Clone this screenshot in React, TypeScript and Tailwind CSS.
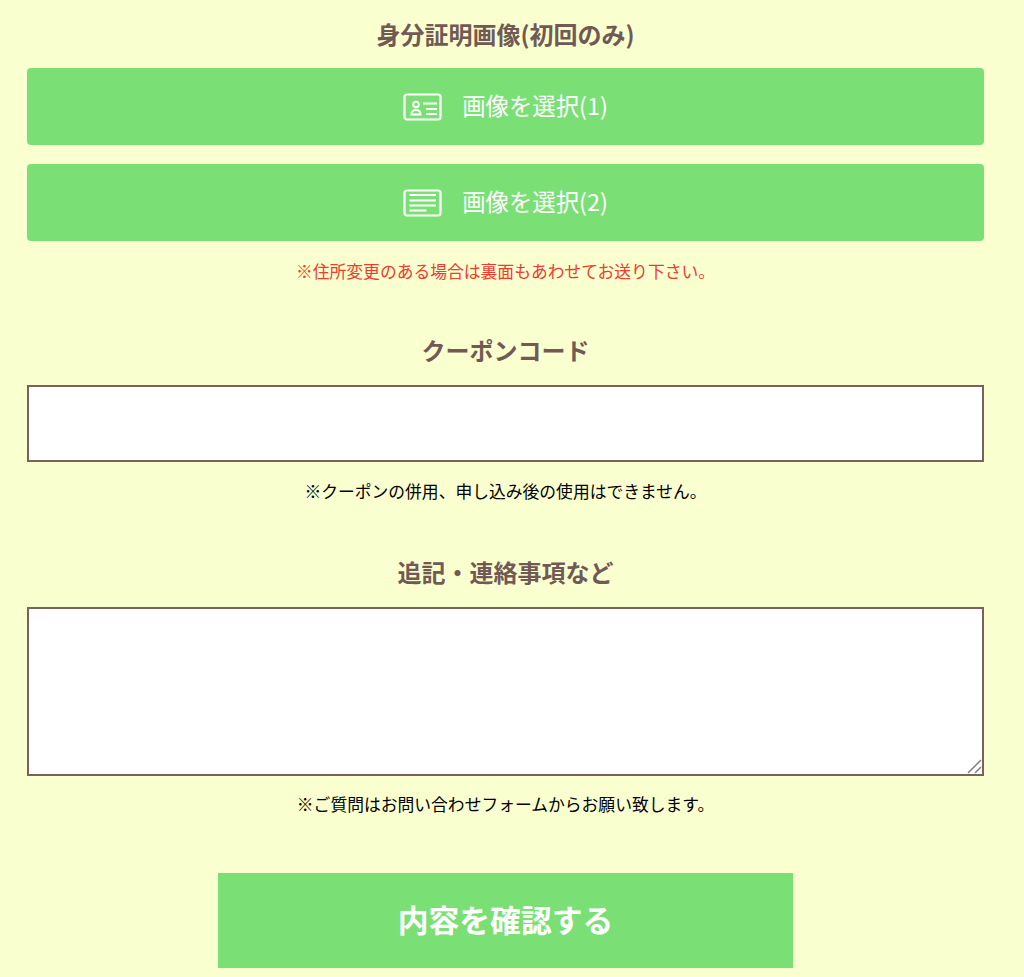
import React from "react";

const font = "font-['Noto_Sans_CJK_JP','Noto_Sans',sans-serif]";

function IdIcon() {
  return (
    <svg width="39" height="28" viewBox="0 0 39 28" fill="none" stroke="white" strokeWidth="2.2">
      <rect x="1.5" y="1.5" width="36" height="25" rx="2.5" />
      <circle cx="13" cy="11.5" r="2.8" strokeWidth="2" />
      <path d="M8.5 21.500c0-3 1.500-4.500 4.500-4.500s4.500 1.500 4.500 4.500z" strokeWidth="2" />
      <path d="M20 10.500h14M23 16h11M23 21h11" strokeWidth="2" />
    </svg>
  );
}

function LinesIcon() {
  return (
    <svg width="39" height="28" viewBox="0 0 39 28" fill="none" stroke="white" strokeWidth="2.2">
      <rect x="1.5" y="1.5" width="36" height="25" rx="2.5" />
      <path d="M6.500 6h26.500M6.500 11.500h26.500M6.500 16.500h26.500M6.500 21.500h17" strokeWidth="2" />
    </svg>
  );
}

function Heading({ children }: { children: React.ReactNode }) {
  return <h2 className="text-center text-[24px] leading-[32px] font-bold text-[#725a54]">{children}</h2>;
}

function SelectButton({ icon, label }: { icon: React.ReactNode; label: string }) {
  return (
    <button className="flex h-[77px] w-full items-center justify-center gap-[20px] rounded-[4px] bg-[#7ae076] text-[23.4px] text-white">
      {icon}
      <span className="pb-[1px]">{label}</span>
    </button>
  );
}

export default function App() {
  return (
    <div className={`${font} min-h-[977px] bg-[#faffd0] pt-[18px] pr-[40px] pl-[27px]`}>
      <Heading>身分証明画像(初回のみ)</Heading>
      <div className="mt-[18px] flex flex-col gap-[19px]">
        <SelectButton icon={<IdIcon />} label="画像を選択(1)" />
        <SelectButton icon={<LinesIcon />} label="画像を選択(2)" />
      </div>
      <p className="mt-[17px] pt-[1px] text-center text-[16.8px] leading-[24px] text-[#f03a2e]">※住所変更のある場合は裏面もあわせてお送り下さい。</p>

      <div className="mt-[51px]"><Heading>クーポンコード</Heading></div>
      <input className="mt-[19px] block h-[77px] w-full border-2 border-[#7a625c] bg-white" />
      <p className="mt-[17px] text-center text-[16.8px] leading-[24px] text-black">※クーポンの併用、申し込み後の使用はできません。</p>

      <div className="mt-[53px]"><Heading>追記・連絡事項など</Heading></div>
      <div className="relative mt-[19px]">
        <textarea className="block h-[169px] w-full resize-none border-2 border-[#7a625c] bg-white" />
        <svg className="absolute right-[2px] bottom-[2px]" width="15" height="15" viewBox="0 0 15 15" fill="none" stroke="#7f7f7f" strokeWidth="1.500">
          <path d="M1 14L14 1M8 14L14 8" />
        </svg>
      </div>
      <p className="mt-[16px] text-center text-[16.8px] leading-[24px] text-black">※ご質問はお問い合わせフォームからお願い致します。</p>

      <button className="mx-auto mt-[57px] block h-[95px] w-[575px] bg-[#7ae076] pb-[2px] text-[30.8px] font-bold text-white">内容を確認する</button>
    </div>
  );
}
